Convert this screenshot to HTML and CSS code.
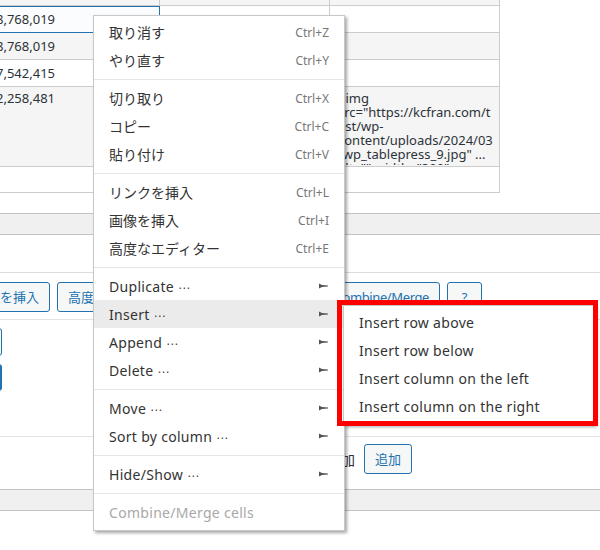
FILE: index.html
```html
<!DOCTYPE html>
<html lang="ja">
<head>
<meta charset="utf-8">
<title>TablePress editor</title>
<link rel="stylesheet" href="styles.css">
</head>
<body>
<div class="page">
  <div class="sheet">
    <div class="cell r0"></div><div class="cell r0"></div><div class="cell r0"></div>
    <div class="cell r1 selected">8,768,019</div><div class="cell r1"></div><div class="cell r1"></div>
    <div class="cell r2">8,768,019</div><div class="cell r2"></div><div class="cell r2"></div>
    <div class="cell r3">7,542,415</div><div class="cell r3"></div><div class="cell r3"></div>
    <div class="cell r4 top">2,258,481</div><div class="cell r4"></div><div class="cell r4 code"><div class="code-text">&lt;img
src="https://kcfran.com/t
est/wp-
content/uploads/2024/03
/wp_tablepress_9.jpg" ...
alt="" width="300"</div></div>
    <div class="cell r5"></div><div class="cell r5"></div><div class="cell r5"></div>
  </div>

  <div class="band"></div>
  <div class="pane"></div>

  <div class="button-row">
    <button class="btn">リンクを挿入</button>
    <button class="btn">画像を挿入</button>
    <button class="btn">高度なエディター</button>
    <span class="grow"></span>
    <button class="btn narrow">Combine/Merge</button>
    <button class="btn help">?</button>
  </div>

  <div class="options">
    <button class="opt-btn">表示</button>
    <button class="opt-btn primary">保存</button>
  </div>

  <div class="add-row">
    <span class="add-label">行を追加</span>
    <button class="btn">追加</button>
  </div>

  <div class="band"></div>
</div>

<div class="ctx">
  <div class="item"><span>取り消す</span><span class="key">Ctrl+Z</span></div>
  <div class="item"><span>やり直す</span><span class="key">Ctrl+Y</span></div>
  <div class="sep"></div>
  <div class="item"><span>切り取り</span><span class="key">Ctrl+X</span></div>
  <div class="item"><span>コピー</span><span class="key">Ctrl+C</span></div>
  <div class="item"><span>貼り付け</span><span class="key">Ctrl+V</span></div>
  <div class="sep"></div>
  <div class="item"><span>リンクを挿入</span><span class="key">Ctrl+L</span></div>
  <div class="item"><span>画像を挿入</span><span class="key">Ctrl+I</span></div>
  <div class="item"><span>高度なエディター</span><span class="key">Ctrl+E</span></div>
  <div class="sep"></div>
  <div class="item"><span class="en">Duplicate <span class="dots">⋯</span></span><svg class="arrow" viewBox="0 0 9 6" width="9" height="6"><polygon points="0,0.5 3,2 9,2.6 9,3.4 3,4 0,5.5"/></svg></div>
  <div class="item active"><span class="en">Insert <span class="dots">⋯</span></span><svg class="arrow" viewBox="0 0 9 6" width="9" height="6"><polygon points="0,0.5 3,2 9,2.6 9,3.4 3,4 0,5.5"/></svg></div>
  <div class="item"><span class="en">Append <span class="dots">⋯</span></span><svg class="arrow" viewBox="0 0 9 6" width="9" height="6"><polygon points="0,0.5 3,2 9,2.6 9,3.4 3,4 0,5.5"/></svg></div>
  <div class="item"><span class="en">Delete <span class="dots">⋯</span></span><svg class="arrow" viewBox="0 0 9 6" width="9" height="6"><polygon points="0,0.5 3,2 9,2.6 9,3.4 3,4 0,5.5"/></svg></div>
  <div class="sep"></div>
  <div class="item"><span class="en">Move <span class="dots">⋯</span></span><svg class="arrow" viewBox="0 0 9 6" width="9" height="6"><polygon points="0,0.5 3,2 9,2.6 9,3.4 3,4 0,5.5"/></svg></div>
  <div class="item"><span class="en">Sort by column <span class="dots">⋯</span></span><svg class="arrow" viewBox="0 0 9 6" width="9" height="6"><polygon points="0,0.5 3,2 9,2.6 9,3.4 3,4 0,5.5"/></svg></div>
  <div class="sep"></div>
  <div class="item"><span class="en">Hide/Show <span class="dots">⋯</span></span><svg class="arrow" viewBox="0 0 9 6" width="9" height="6"><polygon points="0,0.5 3,2 9,2.6 9,3.4 3,4 0,5.5"/></svg></div>
  <div class="sep"></div>
  <div class="item disabled"><span class="en">Combine/Merge cells</span></div>
</div>

<div class="sub">
  <div class="item"><span class="en">Insert row above</span></div>
  <div class="item"><span class="en">Insert row below</span></div>
  <div class="item"><span class="en">Insert column on the left</span></div>
  <div class="item"><span class="en">Insert column on the right</span></div>
</div>

<div class="mark"></div>
</body>
</html>
```

FILE: styles.css
```css
html, body {
  margin: 0;
  padding: 0;
}

body {
  width: 600px;
  height: 550px;
  overflow: hidden;
  position: relative;
  background: #ffffff;
  color: #2c3338;
  font-family: "Noto Sans", "Noto Sans CJK JP", sans-serif;
}

.page {
  width: 600px;
}

/* spreadsheet */
.sheet {
  display: grid;
  grid-template-columns: 172px 170px 170px;
  width: 512px;
  margin: -21px 0 0 -12px;
  font-size: 13px;
}

.cell {
  box-sizing: border-box;
  height: 27px;
  padding: 0 8px;
  display: flex;
  align-items: center;
  border-right: 1px solid #cccccc;
  border-bottom: 1px solid #cccccc;
  background: #ffffff;
  white-space: nowrap;
  overflow: hidden;
}

.r0, .r2, .r4 {
  background: #f5f5f5;
}

.r4 {
  height: 80px;
}

.r5 {
  height: 26px;
}

.top {
  align-items: flex-start;
  padding-top: 2px;
  line-height: 18px;
}

.selected {
  background: #fbfcfe;
  outline: 1px solid #2271b1;
  outline-offset: -1px;
}

.code {
  padding: 0;
  align-items: flex-start;
}

.code-text {
  box-sizing: border-box;
  height: 78px;
  width: 100%;
  padding: 4px 8px 0;
  overflow: hidden;
  white-space: pre;
  font-size: 13px;
  line-height: 14px;
}

/* panels below the sheet */
.band {
  box-sizing: border-box;
  height: 22px;
  margin-top: 20px;
  background: #f0f0f1;
  border-top: 1px solid #c3c4c7;
  border-bottom: 1px solid #c3c4c7;
}

.pane {
  height: 37px;
  border-bottom: 1px solid #dcdcde;
}

.btn {
  box-sizing: border-box;
  height: 30px;
  padding: 0 10px;
  font-family: "Noto Sans", "Noto Sans CJK JP", sans-serif;
  font-size: 13px;
  line-height: 28px;
  color: #2271b1;
  background: #f6f7f7;
  border: 1px solid #2271b1;
  border-radius: 3px;
  white-space: nowrap;
}

.btn.narrow {
  letter-spacing: -0.4px;
}

.button-row {
  display: flex;
  gap: 7px;
  margin-left: -144px;
  padding: 9px 118px 7px 0;
  border-bottom: 1px solid #e4e4e4;
}

.grow {
  flex: 1;
}

.help {
  width: 35px;
  padding: 0;
  text-align: center;
}

.options {
  display: flex;
  flex-direction: column;
  align-items: flex-start;
  gap: 8px;
  height: 108px;
  padding-top: 8px;
  border-bottom: 1px solid #e4e4e4;
}

.opt-btn {
  box-sizing: border-box;
  width: 60px;
  height: 28px;
  margin-left: -58px;
  font-size: 13px;
  color: #2271b1;
  background: #f6f7f7;
  border: 1px solid #2271b1;
  border-radius: 3px;
}

.opt-btn.primary {
  height: 27px;
  color: #ffffff;
  background: #2271b1;
}

.add-row {
  box-sizing: border-box;
  display: flex;
  align-items: center;
  gap: 9px;
  height: 52px;
  padding: 0 0 8px 299px;
}

.add-label {
  font-family: "Noto Sans CJK JP", sans-serif;
  font-size: 14px;
}

.add-row + .band {
  margin-top: 0;
}

/* context menu */
.ctx, .sub {
  position: absolute;
  box-sizing: border-box;
  width: 252px;
  padding: 2px 0 4px;
  background: #ffffff;
  border: 1px solid #c8c8c8;
  box-shadow: 2px 2px 3px rgba(0, 0, 0, 0.35);
  font-size: 14px;
  color: #333333;
}

.ctx {
  left: 93px;
  top: 15px;
  z-index: 10;
}

.sub {
  left: 343px;
  top: 305px;
  z-index: 11;
}

.item {
  display: flex;
  align-items: center;
  justify-content: space-between;
  height: 28px;
  padding: 0 15px;
  white-space: nowrap;
}

.en {
  letter-spacing: 0.3px;
}

.item.active {
  background: #ebebeb;
}

.item.disabled {
  color: #a8a8a8;
}

.sep {
  height: 1px;
  margin: 5px 0 4px;
  background: #e6e6e6;
}

.key {
  font-size: 12px;
  color: #777777;
}

.dots {
  font-family: "DejaVu Sans", sans-serif;
  font-size: 12px;
  letter-spacing: 0;
  color: #444444;
}

.arrow {
  fill: #555555;
  margin-right: 1px;
}

.mark {
  position: absolute;
  left: 337px;
  top: 300px;
  width: 261px;
  height: 126px;
  box-sizing: border-box;
  border: 5px solid #ff0000;
  z-index: 12;
}
```
